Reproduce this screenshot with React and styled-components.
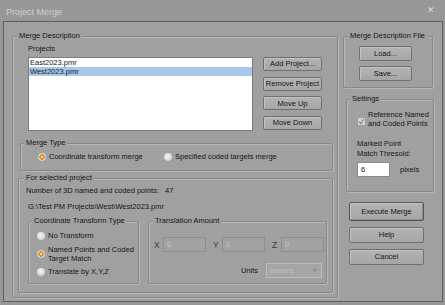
import React from 'react';
import styled, { createGlobalStyle } from 'styled-components';

const GlobalStyle = createGlobalStyle`
  html, body {
    margin: 0;
    padding: 0;
    background: #989898;
  }
  body {
    font-family: "Liberation Sans", Arial, sans-serif;
    font-size: 7.5px;
    color: #161616;
  }
  * {
    box-sizing: border-box;
  }
`;

const Window = styled.div`
  width: 445px;
  height: 305px;
  display: flex;
  flex-direction: column;
  background: #979797;
`;

const TitleBar = styled.div`
  height: 21px;
  flex: none;
  display: flex;
  align-items: center;
  justify-content: space-between;
  padding: 3px 10px 0 6px;
  color: #d0d0d0;
  font-size: 9px;
`;

const Close = styled.span`
  font-size: 9px;
  color: #dedede;
  margin-top: -4px;
`;

const Client = styled.div`
  flex: 1;
  margin: 0 2px 3px 3px;
  border: 1px solid #5e5e5e;
  background: #a0a0a0;
  display: grid;
  grid-template-columns: 326px 91px;
  column-gap: 5px;
  align-items: start;
  padding: 9px 0 0 8px;
`;

const Group = styled.fieldset`
  margin: 0;
  padding: 0;
  min-width: 0;
  width: ${p => p.$w}px;
  border: 1px solid #878787;
  border-radius: 2px;
  box-shadow: 1px 1px 0 #b6b6b6, inset 1px 1px 0 #b6b6b6;
`;

const Legend = styled.legend`
  margin-left: ${p => p.$indent}px;
  padding: 0 2px;
  line-height: 10px;
  background: #a0a0a0;
`;

const GroupBody = styled.div`
  display: flex;
  flex-direction: ${p => (p.$row ? 'row' : 'column')};
  align-items: flex-start;
  padding: ${p => p.$pad};
`;

const Label = styled.div`
  line-height: ${p => p.$lh || 10}px;
  margin-left: ${p => p.$ml || 0}px;
  margin-top: ${p => p.$mt || 0}px;
  white-space: nowrap;
`;

const Count = styled.span`
  margin-left: 6px;
`;

const ProjectsBlock = styled.div`
  margin-left: 10px;
  display: flex;
  flex-direction: column;
`;

const ListRow = styled.div`
  margin-top: 3px;
  display: flex;
  gap: 10px;
`;

const ListBox = styled.div`
  width: 225px;
  height: 74px;
  background: #ffffff;
  border: 1px solid #7c7c7c;
`;

const ListItem = styled.div`
  height: 9px;
  line-height: 9px;
  padding-left: 1px;
  background: ${p => (p.$selected ? '#a7c8eb' : 'transparent')};
`;

const ButtonStack = styled.div`
  display: flex;
  flex-direction: column;
  gap: ${p => p.$gap}px;
  margin-left: ${p => p.$ml || 0}px;
`;

const Button = styled.button`
  font: inherit;
  color: #141414;
  width: ${p => p.$w}px;
  height: ${p => p.$h}px;
  margin-top: ${p => p.$mt || 0}px;
  padding: 0;
  border: 1px solid ${p => (p.$default ? '#555555' : '#707070')};
  border-radius: 2px;
  background: linear-gradient(#b3b3b3, #a6a6a6);
  box-shadow: inset 1px 1px 0 #c2c2c2${p => (p.$default ? ', inset -1px -1px 0 #8c8c8c' : '')};
  line-height: 1;
`;

const SubGroup = styled(Group)`
  margin-left: ${p => p.$ml || 0}px;
  margin-top: ${p => p.$mt || 0}px;
`;

const Option = styled.div`
  display: flex;
  align-items: center;
  gap: 3px;
  width: ${p => (p.$w ? `${p.$w}px` : 'auto')};
  margin-top: ${p => p.$mt || 0}px;
  line-height: ${p => p.$lh || 10}px;
  white-space: nowrap;
`;

const Radio = styled.span`
  flex: none;
  width: 8px;
  height: 8px;
  border-radius: 50%;
  background: ${p =>
    p.$on
      ? 'radial-gradient(circle, #f6dfae 0 1px, #e0892b 1.6px 2.6px, #e9e9e9 3px, #c2c2c2 4px)'
      : 'radial-gradient(circle at 45% 40%, #f5f5f5 0, #d8d8d8 60%, #b9b9b9 100%)'};
`;

const SplitRow = styled.div`
  display: flex;
  gap: 9px;
  margin-top: 4px;
  margin-left: 2px;
  align-items: stretch;
`;

const AxisRow = styled.div`
  display: flex;
  gap: 7px;
`;

const Axis = styled.div`
  display: flex;
  align-items: center;
  font-size: 8.5px;
  color: #3a3a3a;
`;

const AxisName = styled.span`
  width: 9px;
`;

const Field = styled.div`
  width: ${p => p.$w}px;
  height: 15px;
  display: flex;
  align-items: center;
  padding-left: 3px;
  font-size: 7.5px;
  background: ${p => (p.$disabled ? '#a2a2a2' : '#ffffff')};
  color: ${p => (p.$disabled ? '#c4c4c4' : '#111111')};
  border: 1px solid ${p => (p.$disabled ? '#8e8e8e' : '#8a8a8a')};
`;

const UnitsRow = styled.div`
  align-self: stretch;
  display: flex;
  align-items: center;
  justify-content: flex-end;
  gap: 8px;
  margin-top: 11px;
  padding-right: 2px;
`;

const Select = styled.div`
  width: 56px;
  height: 15px;
  display: flex;
  align-items: center;
  justify-content: space-between;
  padding: 0 4px 0 3px;
  background: #a5a5a5;
  border: 1px solid #bcbcbc;
  color: #c2c2c2;
`;

const Caret = styled.span`
  width: 0;
  height: 0;
  border-left: 2px solid transparent;
  border-right: 2px solid transparent;
  border-top: 3px solid #8c8c8c;
`;

const RightColumn = styled.div`
  display: flex;
  flex-direction: column;
  align-items: flex-start;
`;

const CheckRow = styled.div`
  display: flex;
  align-items: flex-start;
  gap: 2px;
`;

const CheckBox = styled.span`
  flex: none;
  width: 9px;
  height: 9px;
  margin-top: 7px;
  background: #d4d4d4;
  border: 1px solid #9a9a9a;
  display: flex;
  align-items: center;
  justify-content: center;
`;

const InputRow = styled.div`
  display: flex;
  align-items: center;
  gap: 10px;
  margin-top: 3px;
`;

function CheckMark() {
  return (
    <svg width="7" height="7" viewBox="0 0 7 7">
      <path d="M1 3.6 L2.8 5.6 L6 1" fill="none" stroke="#7a7a7a" strokeWidth="1.1" />
    </svg>
  );
}

export default function App() {
  return (
    <>
      <GlobalStyle />
      <Window>
        <TitleBar>
          <span>Project Merge</span>
          <Close>✕</Close>
        </TitleBar>
        <Client>
          <Group $w={326}>
            <Legend $indent={4}>Merge Description</Legend>
            <GroupBody $pad="3px 4px 4px 5px">
              <ProjectsBlock>
                <Label>Projects</Label>
                <ListRow>
                  <ListBox>
                    <ListItem>East2023.pmr</ListItem>
                    <ListItem $selected>West2023.pmr</ListItem>
                  </ListBox>
                  <ButtonStack $gap={5.7}>
                    <Button $w={59} $h={14}>Add Project...</Button>
                    <Button $w={59} $h={14}>Remove Project</Button>
                    <Button $w={59} $h={14}>Move Up</Button>
                    <Button $w={59} $h={14}>Move Down</Button>
                  </ButtonStack>
                </ListRow>
              </ProjectsBlock>

              <SubGroup $w={313} $ml={2} $mt={7}>
                <Legend $indent={3}>Merge Type</Legend>
                <GroupBody $row $pad="4px 0 8px 17px">
                  <Option $w={126}>
                    <Radio $on />
                    Coordinate transform merge
                  </Option>
                  <Option>
                    <Radio />
                    Specified coded targets merge
                  </Option>
                </GroupBody>
              </SubGroup>

              <SubGroup $w={315} $mt={2}>
                <Legend $indent={5}>For selected project</Legend>
                <GroupBody $pad="3px 4px 8px 7px">
                  <Label>
                    Number of 3D named and coded points:<Count>47</Count>
                  </Label>
                  <Label $ml={2} $mt={6}>G:\Test PM Projects\West\West2023.pmr</Label>
                  <SplitRow>
                    <Group $w={111}>
                      <Legend $indent={3}>Coordinate Transform Type</Legend>
                      <GroupBody $pad="5px 0 6px 8px">
                        <Option>
                          <Radio />
                          No Transform
                        </Option>
                        <Option $mt={4} $lh={9}>
                          <Radio $on />
                          <span>
                            Named Points and Coded
                            <br />
                            Target Match
                          </span>
                        </Option>
                        <Option $mt={4}>
                          <Radio />
                          Translate by X,Y,Z
                        </Option>
                      </GroupBody>
                    </Group>
                    <Group $w={179}>
                      <Legend $indent={4}>Translation Amount</Legend>
                      <GroupBody $pad="11px 2px 5px 5px">
                        <AxisRow>
                          {['X', 'Y', 'Z'].map(a => (
                            <Axis key={a}>
                              <AxisName>{a}</AxisName>
                              <Field $w={43} $disabled>0</Field>
                            </Axis>
                          ))}
                        </AxisRow>
                        <UnitsRow>
                          <span>Units</span>
                          <Select>
                            meters
                            <Caret />
                          </Select>
                        </UnitsRow>
                      </GroupBody>
                    </Group>
                  </SplitRow>
                </GroupBody>
              </SubGroup>
            </GroupBody>
          </Group>

          <RightColumn>
            <Group $w={90}>
              <Legend $indent={4}>Merge Description File</Legend>
              <GroupBody $pad="5px 0 6px 15px">
                <ButtonStack $gap={5}>
                  <Button $w={53} $h={15}>Load...</Button>
                  <Button $w={53} $h={15}>Save...</Button>
                </ButtonStack>
              </GroupBody>
            </Group>

            <SubGroup $w={88} $ml={3} $mt={6}>
              <Legend $indent={3}>Settings</Legend>
              <GroupBody $pad="6px 0 14px 10px">
                <CheckRow>
                  <CheckBox>
                    <CheckMark />
                  </CheckBox>
                  <Label $lh={9}>
                    Reference Named
                    <br />
                    and Coded Points
                  </Label>
                </CheckRow>
                <Label $mt={11}>
                  Marked Point
                  <br />
                  Match Thresold:
                </Label>
                <InputRow>
                  <Field $w={33}>6</Field>
                  <span>pixels</span>
                </InputRow>
              </GroupBody>
            </SubGroup>

            <ButtonStack $gap={6} $ml={6}>
              <Button $w={75} $h={19} $mt={10} $default>Execute Merge</Button>
              <Button $w={75} $h={16}>Help</Button>
              <Button $w={75} $h={16}>Cancel</Button>
            </ButtonStack>
          </RightColumn>
        </Client>
      </Window>
    </>
  );
}
